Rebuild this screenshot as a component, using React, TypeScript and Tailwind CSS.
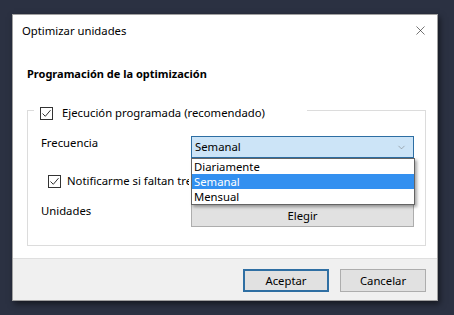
import { ChevronDown, X } from 'lucide-react';

const font = { fontFamily: '"Noto Sans", "Liberation Sans", sans-serif' };

function CheckBox() {
  return (
    <span className="flex h-[13px] w-[13px] shrink-0 items-center justify-center border border-[#333333] bg-white">
      <svg width="11" height="11" viewBox="0 0 11 11" fill="none">
        <path d="M1.5 5.5 L4.3 8.3 L9.5 2.2" stroke="#333333" strokeWidth="1" />
      </svg>
    </span>
  );
}

export default function App() {
  return (
    <div
      className="h-[315px] w-[454px] bg-[#2b3142] pl-[12px] pt-[14px] text-[11.3px] leading-[16px] text-black"
      style={font}
    >
      <div className="flex h-[287px] w-[426px] flex-col border border-[#a0a0a0] bg-white shadow-[2px_3px_6px_rgba(0,0,0,0.5)]">
        {/* title bar */}
        <div className="flex h-[31px] shrink-0 items-center justify-between pl-[9px] pr-[9px]">
          <span>Optimizar unidades</span>
          <X size={15} strokeWidth={1} className="text-[#222]" />
        </div>

        {/* heading */}
        <div className="mt-[20px] pl-[14px] text-[11px] font-bold">Programación de la optimización</div>

        {/* group */}
        <div className="ml-[14px] mr-[11px] mt-[28px] flex h-[136px] flex-col border border-[#dcdcdc] pl-[13px] pr-[11px]">
          <div className="-ml-[7px] -mt-[6px] flex h-[16px] w-[273px] items-center gap-[9px] bg-white pl-[6px]">
            <CheckBox />
            <span>Ejecución programada (recomendado)</span>
          </div>

          <div className="mt-[15px] flex items-start justify-between">
            <span className="-mt-[1px]">Frecuencia</span>
            <div className="relative w-[223px]">
              <div className="flex h-[22px] items-center justify-between border border-[#2d6ea3] bg-[#cce4f7] pl-[3px] pr-[6px]">
                <span>Semanal</span>
                <ChevronDown size={11} strokeWidth={1} className="text-[#666]" />
              </div>
              <div className="absolute left-0 top-full z-10 flex w-[224px] flex-col border border-[#646464] bg-white shadow-[2px_2px_3px_rgba(0,0,0,0.35)]">
                <div className="flex h-[15px] items-center pl-[2px]">Diariamente</div>
                <div className="flex h-[15px] items-center bg-[#3390f0] pl-[2px] text-white">Semanal</div>
                <div className="flex h-[15px] items-center pl-[2px]">Mensual</div>
              </div>
            </div>
          </div>

          <div className="ml-[7px] mt-[15px] flex h-[16px] items-center gap-[6px]">
            <CheckBox />
            <span className="w-[122px] overflow-hidden whitespace-nowrap">
              Notificarme si faltan tres ejecuciones programadas consecutivas
            </span>
          </div>

          <div className="mt-[15px] flex items-start justify-between">
            <span className="-mt-[1px]">Unidades</span>
            <button className="h-[23px] w-[223px] border border-[#adadad] bg-[#e1e1e1]">Elegir</button>
          </div>
        </div>

        {/* footer */}
        <div className="mt-auto flex h-[42px] shrink-0 items-center justify-end gap-[11px] border-t border-[#dfdfdf] bg-[#f0f0f0] pr-[11px] pt-[2px]">
          <button className="h-[23px] w-[86px] border-2 border-[#2f6fa3] bg-[#e1e1e1]">Aceptar</button>
          <button className="h-[23px] w-[86px] border border-[#adadad] bg-[#e1e1e1]">Cancelar</button>
        </div>
      </div>
    </div>
  );
}
